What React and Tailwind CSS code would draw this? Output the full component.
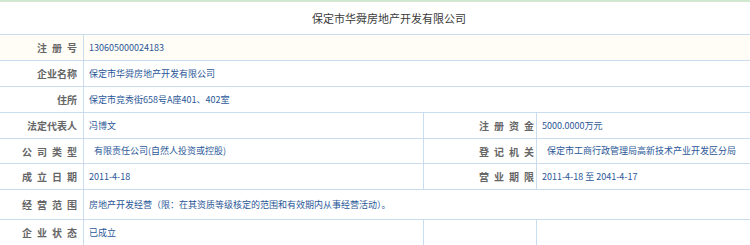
const font = { fontFamily: '"Noto Sans CJK SC", "Liberation Sans", sans-serif' };

function Label({ text, spaced, right, bg }) {
  return (
    <div
      className={`flex items-center justify-end border-r border-b border-[#c9ddef] text-[10px] font-bold text-[#666] ${right ? 'pr-[2px]' : 'pr-[6px]'} ${bg || ''}`}
    >
      {spaced ? (
        <span className="tracking-[5px] mr-[-5px]">{text}</span>
      ) : (
        <span>{text}</span>
      )}
    </div>
  );
}

function Value({ text, span, indent, last, bg }) {
  return (
    <div
      className={`flex items-center border-b border-[#c9ddef] text-[9px] text-[#2a5797] whitespace-nowrap ${indent ? 'pl-[10px]' : 'pl-[5px]'} ${last ? '' : 'border-r'} ${span ? 'col-span-3' : ''} ${bg || ''}`}
    >
      {text}
    </div>
  );
}

export default function App() {
  return (
    <div className="w-[750px] h-[245px] overflow-hidden bg-white" style={font}>
      <div className="border-t-2 border-[#cfe8cf]">
        <div className="h-[33px] flex items-center justify-center pl-[28px] border-b border-[#c9ddef] text-[11px] text-[#3a3a3a]">
          保定市华舜房地产开发有限公司
        </div>
        <div className="grid grid-cols-[84px_340px_113px_1fr]">
          <div className="h-[26px] grid">
            <Label text="注册号" spaced bg="bg-[#fffdf6]" />
          </div>
          <Value text="130605000024183" span last bg="bg-[#fffdf6]" />

          <div className="h-[26px] grid">
            <Label text="企业名称" />
          </div>
          <Value text="保定市华舜房地产开发有限公司" span last />

          <div className="h-[26px] grid">
            <Label text="住所" />
          </div>
          <Value text="保定市竞秀街658号A座401、402室" span last />

          <div className="h-[26px] grid">
            <Label text="法定代表人" />
          </div>
          <Value text="冯博文" />
          <Label text="注册资金" spaced right />
          <Value text="5000.0000万元" last />

          <div className="h-[25px] grid">
            <Label text="公司类型" spaced />
          </div>
          <Value text="有限责任公司(自然人投资或控股)" indent />
          <Label text="登记机关" spaced right />
          <Value text="保定市工商行政管理局高新技术产业开发区分局" indent last />

          <div className="h-[26px] grid">
            <Label text="成立日期" spaced />
          </div>
          <Value text="2011-4-18" />
          <Label text="营业期限" spaced right />
          <Value text="2011-4-18 至 2041-4-17" last />

          <div className="h-[30px] grid">
            <Label text="经营范围" spaced />
          </div>
          <Value text="房地产开发经营（限：在其资质等级核定的范围和有效期内从事经营活动）。" span last />

          <div className="h-[26px] grid">
            <Label text="企业状态" spaced />
          </div>
          <Value text="已成立" />
          <div className="border-r border-b border-[#c9ddef]" />
          <div className="border-b border-[#c9ddef]" />
        </div>
      </div>
    </div>
  );
}
